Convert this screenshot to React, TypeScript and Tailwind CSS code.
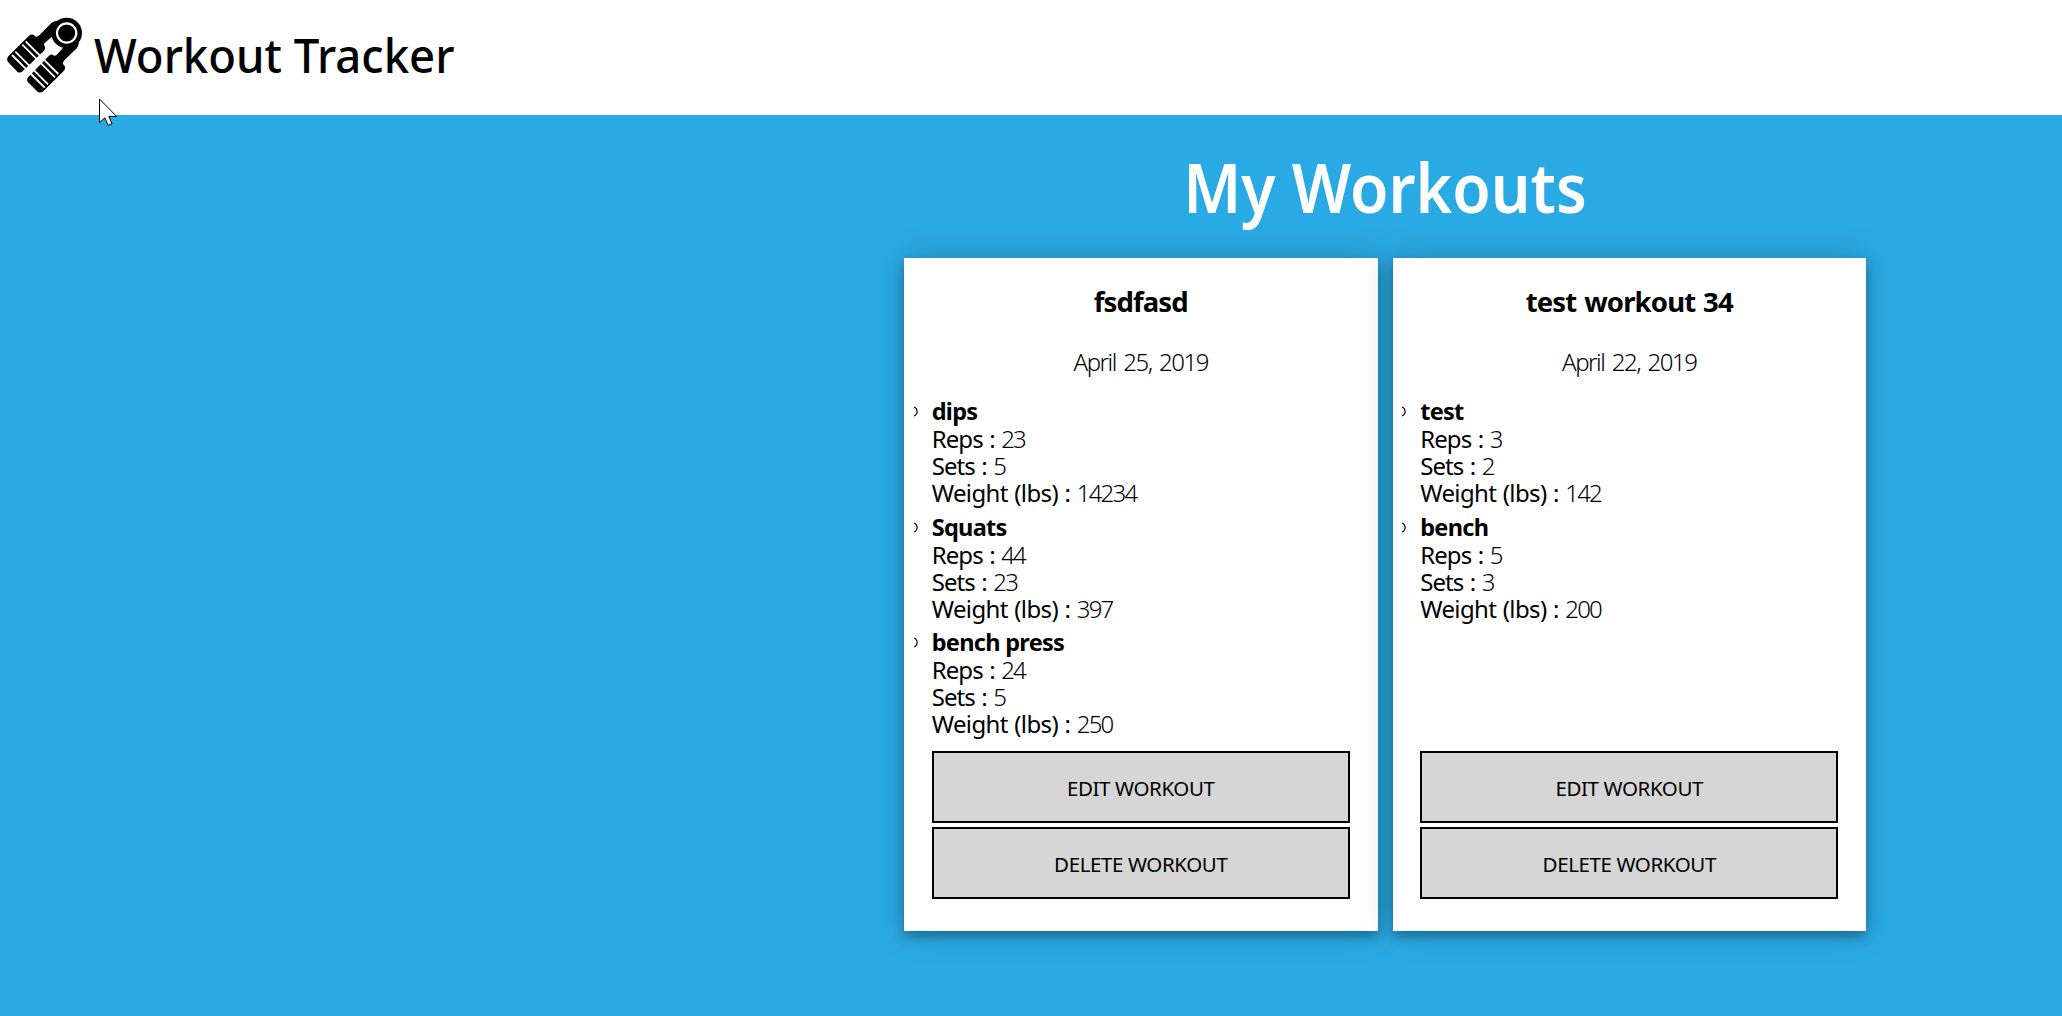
type Exercise = { name: string; reps: number; sets: number; weight: number };
type Workout = { title: string; date: string; exercises: Exercise[] };

const workouts: Workout[] = [
  {
    title: "fsdfasd",
    date: "April 25, 2019",
    exercises: [
      { name: "dips", reps: 23, sets: 5, weight: 14234 },
      { name: "Squats", reps: 44, sets: 23, weight: 397 },
      { name: "bench press", reps: 24, sets: 5, weight: 250 },
    ],
  },
  {
    title: "test workout 34",
    date: "April 22, 2019",
    exercises: [
      { name: "test", reps: 3, sets: 2, weight: 142 },
      { name: "bench", reps: 5, sets: 3, weight: 200 },
    ],
  },
];

function GripHandle() {
  return (
    <>
      <path d="M24 186 Q18 178 25 169 L84 110 Q96 97 107 110 Q113 111 118 106 L155 68 Q164 61 178 62 L180 100 L158 108 L133 130 Q130 137 135 141 Q136 147 132 152 L68 214 Q60 221 52 215 Z" />
      <path
        d="M36 165 L80 209 M46 155 L90 199 M67 134 L111 178 M77 124 L121 168"
        stroke="#fff"
        strokeWidth="5.5"
      />
    </>
  );
}

function Logo() {
  return (
    <svg className="h-[115px] w-[94px] shrink-0" viewBox="0 0 282 345" fill="#000">
      <GripHandle />
      <g transform="matrix(0 -1 -1 0 299 299)">
        <GripHandle />
      </g>
      <circle cx="200" cy="99" r="46" />
      <circle cx="200" cy="99" r="29" fill="none" stroke="#fff" strokeWidth="6.5" />
    </svg>
  );
}

function Cursor() {
  return (
    <svg className="absolute left-[99px] top-[98px] h-[29px] w-[20px]" viewBox="0 0 20 29">
      <path
        d="M0.5 1 V24.6 L5.8 19.8 L9.2 27.4 L13 25.8 L9.8 18.4 H17.6 Z"
        fill="#fff"
        stroke="#000"
        strokeWidth="1"
      />
    </svg>
  );
}

function Stat({ label, value }: { label: string; value: number }) {
  const tracking =
    label.length > 4 ? "tracking-[-0.6px] [word-spacing:0.7px]" : "tracking-[-0.9px] [word-spacing:1px]";
  return (
    <p>
      <span className={tracking}>{label} :</span>
      <span className="ml-[6.5px] font-light tracking-[-1.8px]">{value}</span>
    </p>
  );
}

function ActionButton({ children }: { children: string }) {
  return (
    <button className="h-[72px] w-full border-2 border-black bg-[#d6d6d6] pt-[3px] text-[20.5px] uppercase tracking-[-0.4px]">
      {children}
    </button>
  );
}

function WorkoutCard({ workout }: { workout: Workout }) {
  return (
    <article className="flex h-[673px] flex-1 flex-col bg-white px-[27.7px] pt-[26px] pb-8 shadow-[0_6px_10px_rgba(0,0,0,0.25),0_0_30px_rgba(0,0,0,0.22)]">
      <h2 className="text-center text-[27.5px] leading-9 font-bold tracking-[-0.85px] [word-spacing:1.5px]">
        {workout.title}
      </h2>
      <p className="mt-[26px] text-center text-2xl leading-8 font-light tracking-[-1.45px] [word-spacing:2.5px]">
        {workout.date}
      </p>
      <ul className="mt-5 flex flex-col gap-[7.6px] text-2xl leading-[27px]">
        {workout.exercises.map((exercise) => (
          <li key={exercise.name} className="relative">
            <svg className="absolute -left-[18px] top-[8px] h-[11px] w-[5px]" viewBox="0 0 5 11">
              <path d="M0 1 A4.8 4.8 0 0 1 0 10" fill="none" stroke="#000" strokeWidth="1.1" />
            </svg>
            <p className="text-[23.5px] font-bold tracking-[-0.7px]">{exercise.name}</p>
            <Stat label="Reps" value={exercise.reps} />
            <Stat label="Sets" value={exercise.sets} />
            <Stat label="Weight (lbs)" value={exercise.weight} />
          </li>
        ))}
      </ul>
      <div className="mt-auto flex flex-col gap-1">
        <ActionButton>Edit Workout</ActionButton>
        <ActionButton>Delete Workout</ActionButton>
      </div>
    </article>
  );
}

export default function App() {
  return (
    <div className="relative flex h-screen flex-col overflow-hidden bg-[#2aaae4] font-['Noto_Sans',sans-serif] text-black">
      <header className="flex h-[115px] shrink-0 bg-white">
        <Logo />
        <h1 className="mt-[23px] h-16 origin-left scale-x-[0.947] text-5xl leading-[64px] font-medium whitespace-nowrap">
          Workout Tracker
        </h1>
      </header>
      <main className="ml-[904px] w-[962px] pt-[26px]">
        <h2 className="scale-x-[0.91] text-center text-[68.6px] leading-[92px] font-semibold text-white">
          My Workouts
        </h2>
        <div className="mt-[25px] flex gap-[15px]">
          {workouts.map((workout) => (
            <WorkoutCard key={workout.title} workout={workout} />
          ))}
        </div>
      </main>
      <Cursor />
    </div>
  );
}
